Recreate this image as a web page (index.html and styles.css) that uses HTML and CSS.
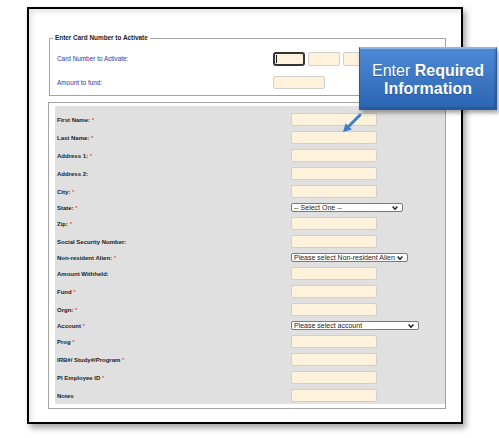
FILE: index.html
```html
<!DOCTYPE html>
<html lang="en">
<head>
<meta charset="utf-8">
<title>Activate Card</title>
<link rel="stylesheet" href="styles.css">
</head>
<body>
<div class="frame">
  <fieldset class="card">
    <legend>Enter Card Number to Activate</legend>
    <div class="card-grid">
      <label class="blue">Card Number to Activate:</label>
      <div class="card-inputs">
        <span class="focus"><input class="field sm focused" type="text"></span>
        <input class="field sm" type="text">
        <input class="field sm" type="text">
        <input class="field sm" type="text">
      </div>
      <label class="blue">Amount to fund:</label>
      <input class="field amt" type="text">
    </div>
  </fieldset>

  <fieldset class="info">
    <div class="table">
      <label>First Name: <span class="req">*</span></label>
      <input class="field" type="text">
      <label>Last Name: <span class="req">*</span></label>
      <input class="field" type="text">
      <label>Address 1: <span class="req">*</span></label>
      <input class="field" type="text">
      <label>Address 2:</label>
      <input class="field" type="text">
      <label>City: <span class="req">*</span></label>
      <input class="field" type="text">
      <label>State: <span class="req">*</span></label>
      <div class="select w-state"><span>-- Select One --</span><svg class="chev" width="6" height="4" viewBox="0 0 6 4"><polyline points="0.6,0.6 3,3.2 5.4,0.6" fill="none" stroke="#222" stroke-width="1.5"/></svg></div>
      <label>Zip: <span class="req">*</span></label>
      <input class="field" type="text">
      <label>Social Security Number:</label>
      <input class="field" type="text">
      <label>Non-resident Alien: <span class="req">*</span></label>
      <div class="select w-alien"><span>Please select Non-resident Alien</span><svg class="chev" width="6" height="4" viewBox="0 0 6 4"><polyline points="0.6,0.6 3,3.2 5.4,0.6" fill="none" stroke="#222" stroke-width="1.5"/></svg></div>
      <label>Amount Withheld:</label>
      <input class="field" type="text">
      <label>Fund <span class="req">*</span></label>
      <input class="field" type="text">
      <label>Orgn: <span class="req">*</span></label>
      <input class="field" type="text">
      <label>Account <span class="req">*</span></label>
      <div class="select w-account"><span>Please select account</span><svg class="chev" width="6" height="4" viewBox="0 0 6 4"><polyline points="0.6,0.6 3,3.2 5.4,0.6" fill="none" stroke="#222" stroke-width="1.5"/></svg></div>
      <label>Prog <span class="req">*</span></label>
      <input class="field" type="text">
      <label>IRB#/ Study#/Program <span class="req">*</span></label>
      <input class="field" type="text">
      <label>PI Employee ID <span class="req">*</span></label>
      <input class="field" type="text">
      <label>Notes</label>
      <input class="field" type="text">
    </div>
  </fieldset>
</div>

<div class="callout">Enter <b>Required</b><br><b>Information</b></div>

<svg class="arrow" width="25" height="26" viewBox="0 0 25 26">
  <line x1="20" y1="5" x2="9" y2="16" stroke="#3d7cc9" stroke-width="3" stroke-linecap="round"/>
  <polygon points="3,22 11.8,19.4 5.6,13.2" fill="#3d7cc9"/>
</svg>
</body>
</html>
```

FILE: styles.css
```css
html, body {
  margin: 0;
  padding: 0;
}

body {
  position: relative;
  width: 499px;
  height: 438px;
  overflow: hidden;
  background: #fff;
  font-family: "Liberation Sans", Arial, sans-serif;
  color: #222;
}

.frame {
  margin: 7px 0 0 27px;
  width: 436px;
  height: 417px;
  box-sizing: border-box;
  border: 2px solid #000;
  background: #fff;
  box-shadow: 3px 4px 6px rgba(0, 0, 0, 0.35), inset 5px 5px 6px -3px rgba(0, 0, 0, 0.12);
  padding: 25px 0 0 19px;
}

fieldset {
  box-sizing: border-box;
  min-width: 0;
}

.card {
  margin: 0 0 0 1px;
  width: 397px;
  border: 1px solid #a3a3a3;
  padding: 10px 0 6px 7px;
}

.card legend {
  font-size: 6.4px;
  line-height: 8px;
  font-weight: bold;
  color: #222;
  padding: 0 2px;
  margin-left: -4px;
}

.card-grid {
  display: grid;
  grid-template-columns: 216px auto;
  row-gap: 10px;
  align-items: center;
  justify-items: start;
}

.blue {
  font-size: 6.4px;
  line-height: 8px;
  color: #33379a;
}

.card-inputs {
  display: flex;
  gap: 3px;
}

.field {
  display: block;
  width: 86px;
  height: 13px;
  box-sizing: border-box;
  margin: 0;
  padding: 0;
  border: 1px solid #cfcfcf;
  border-radius: 2px;
  background: #fff2dc;
  outline: none;
}

.field.sm {
  width: 32px;
  height: 14px;
}

.field.amt {
  width: 52px;
}

.focus {
  position: relative;
  display: block;
}

.field.focused {
  border: 2px solid #333;
  border-radius: 3px;
}

.focus::after {
  content: "";
  position: absolute;
  left: 3px;
  top: 3px;
  width: 1px;
  height: 8px;
  background: #111;
}

.info {
  margin: 6px 0 0 0;
  width: 398px;
  border: 1px solid #a3a3a3;
  padding: 3px 0 4px 6px;
  box-shadow: inset 1px 1px 0 #fff;
}

.table {
  background: #e0e0e0;
  display: grid;
  grid-template-columns: 234px auto;
  row-gap: 5px;
  padding: 7px 0 2px 2px;
  align-items: center;
  justify-items: start;
}

.table label {
  font-size: 6px;
  line-height: 8px;
  font-weight: bold;
  color: #222;
  white-space: nowrap;
}

.req {
  color: #e02020;
  font-weight: normal;
}

.select {
  display: flex;
  align-items: center;
  justify-content: space-between;
  height: 9px;
  box-sizing: border-box;
  border: 1px solid #7a7a7a;
  border-radius: 2px;
  background: #fff;
  padding: 0 4px 0 2px;
  font-size: 7px;
  line-height: 7px;
  color: #222;
  white-space: nowrap;
}

.w-state { width: 112px; }
.w-alien { width: 117px; }
.w-account { width: 128px; }

.chev {
  flex: none;
  display: block;
}

.callout {
  position: absolute;
  left: 359px;
  top: 47px;
  width: 138px;
  height: 63px;
  box-sizing: border-box;
  padding-top: 14px;
  background: linear-gradient(#4d8bd7, #2c64b2);
  border: 1px solid #2a5ba0;
  border-top-color: #8fb7ea;
  box-shadow: inset 0 1px 0 rgba(255, 255, 255, 0.35), inset -2px -2px 0 rgba(0, 0, 0, 0.12), 2px 3px 4px rgba(0, 0, 0, 0.35);
  color: #fff;
  font-size: 16px;
  line-height: 18px;
  text-align: center;
  text-shadow: 0 1px 1px rgba(0, 0, 0, 0.25);
}

.arrow {
  position: absolute;
  left: 340px;
  top: 110px;
}
```
